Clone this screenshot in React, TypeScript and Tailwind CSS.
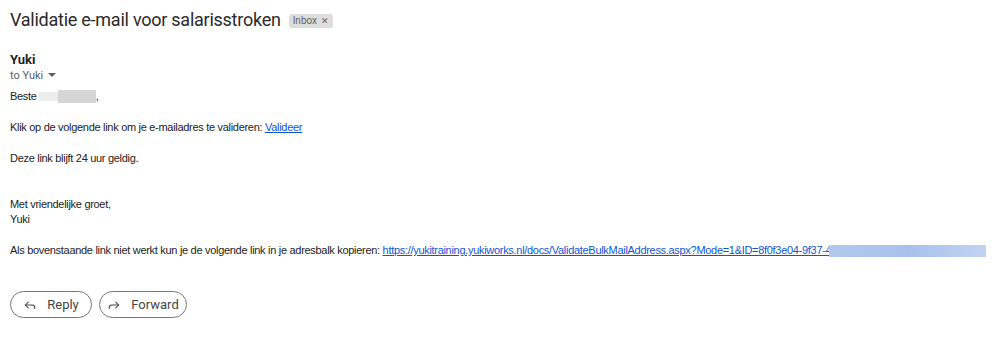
import { Reply, Forward } from 'lucide-react';

export default function App() {
  return (
    <div className="w-[1000px] h-[344px] bg-white overflow-hidden text-[#222]">
      {/* Subject */}
      <div className="flex items-center gap-2 pl-[10px] pt-[6px]">
        <h1 className="text-[18px] tracking-[-0.25px] leading-[28px] text-[#2a2a2a] font-['Roboto',sans-serif]">
          Validatie e-mail voor salarisstroken
        </h1>
        <span className="flex items-center gap-1 bg-[#dddddd] text-[#666] rounded-[3px] px-[4px] h-[14px] text-[10px] leading-none font-['Roboto',sans-serif] mt-[2px]">
          Inbox <span className="text-[9px]">✕</span>
        </span>
      </div>

      {/* Sender */}
      <div className="pl-[10px] pt-[18px] font-['Roboto',sans-serif]">
        <div className="text-[13px] leading-[16px] font-bold text-[#1f1f1f]">Yuki</div>
        <div className="flex items-center gap-[5px] text-[11px] leading-[15px] text-[#5e5e5e]">
          to Yuki
          <svg width="8" height="5" viewBox="0 0 8 5">
            <path d="M0 0 L8 0 L4 4 Z" fill="#5e5e5e" />
          </svg>
        </div>
      </div>

      {/* Body */}
      <div className="pl-[10px] pt-[6px] text-[11px] tracking-[-0.3px] leading-[15px] text-[#222] font-['Liberation_Sans',Arial,sans-serif]">
        <p className="flex items-center">
          Beste
          <span className="inline-block ml-[2px] w-[19px] h-[9px] bg-[#ececec]" />
          <span className="inline-block w-[38px] h-[13px] bg-[#d6d6d6]" />
          ,
        </p>
        <p className="mt-[16px]">
          Klik op de volgende link om je e-mailadres te valideren:{' '}
          <a className="text-[#1155cc] underline">Valideer</a>
        </p>
        <p className="mt-[16px]">Deze link blijft 24 uur geldig.</p>
        <p className="mt-[31px]">Met vriendelijke groet,</p>
        <p>Yuki</p>
        <p className="mt-[16px] flex items-center whitespace-nowrap">
          Als bovenstaande link niet werkt kun je de volgende link in je adresbalk kopieren:&nbsp;
          <a className="text-[#1155cc] underline">
            https://yukitraining.yukiworks.nl/docs/ValidateBulkMailAddress.aspx?Mode=1&amp;ID=8f0f3e04-9f37-4
          </a>
          <span className="inline-block w-[157px] h-[12px] -ml-[2px] bg-gradient-to-r from-[#b3c8ee] via-[#a9c0ec] to-[#c2d3f2]" />
        </p>
      </div>

      {/* Actions */}
      <div className="flex gap-[7px] pl-[10px] pt-[33px] font-['Roboto',sans-serif]">
        <button className="flex items-center justify-center gap-[10px] w-[82px] h-[27px] rounded-full border border-[#747775] text-[13px] text-[#444]">
          <Reply size={14} strokeWidth={1.8} />
          Reply
        </button>
        <button className="flex items-center justify-center gap-[10px] w-[88px] h-[27px] rounded-full border border-[#747775] text-[13px] text-[#444]">
          <Forward size={14} strokeWidth={1.8} />
          Forward
        </button>
      </div>
    </div>
  );
}
